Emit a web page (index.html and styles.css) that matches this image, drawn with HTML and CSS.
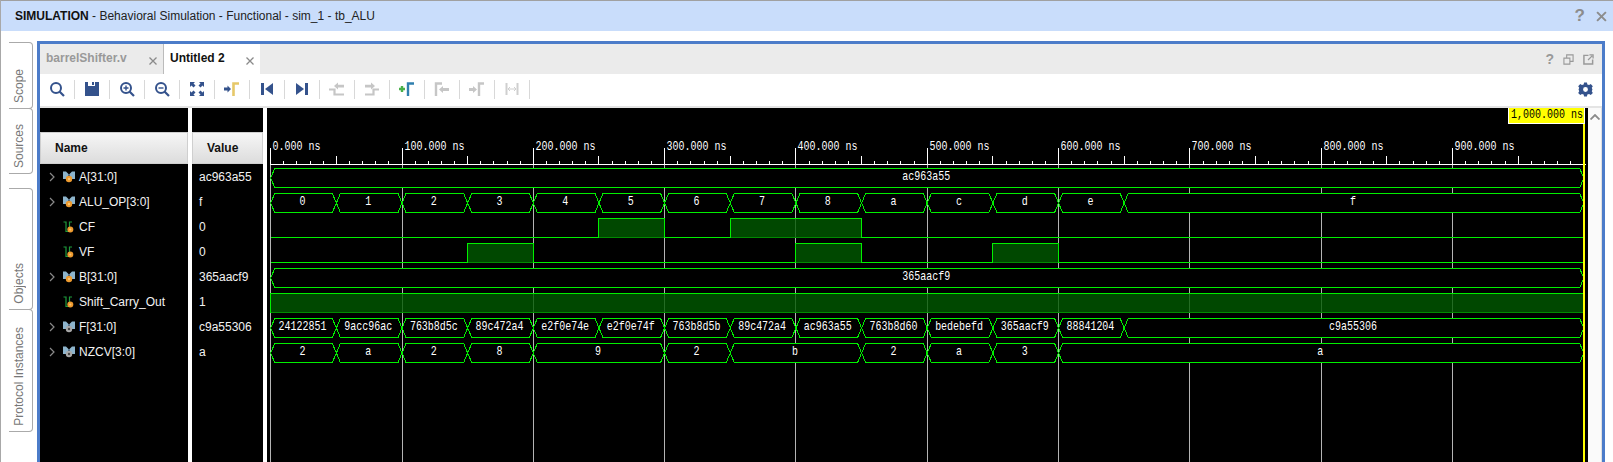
FILE: index.html
```html
<!DOCTYPE html>
<html lang="en">
<head>
    <meta charset="UTF-8">
    <meta name="viewport" content="width=device-width, initial-scale=1.0">
    <title>SIMULATION - tb_ALU</title>
    <link rel="stylesheet" href="styles.css">
</head>
<body>
    <svg class="defs">
        <symbol id="busOrange" viewBox="0 0 12 12">
            <path d="M0 0.5 L3 0.5 L6 3.5 L9 0.5 L12 0.5 L12 8 L9 8 L6 6 L3 8 L0 8 Z" fill="#8db4cc"/>
            <path d="M5 3.5 H7 V7 H5 Z" fill="#45617a"/>
            <circle cx="6" cy="8" r="3.2" fill="#ee9a2e"/>
            <circle cx="6" cy="8" r="1.2" fill="#ffc56e"/>
        </symbol>
        <symbol id="busGrey" viewBox="0 0 12 12">
            <path d="M0 0.5 L3 0.5 L6 3.5 L9 0.5 L12 0.5 L12 8 L9 8 L6 6 L3 8 L0 8 Z" fill="#8db4cc"/>
            <path d="M5 3.5 H7 V7 H5 Z" fill="#45617a"/>
            <circle cx="6" cy="8" r="3.2" fill="#a8a8a8"/>
            <circle cx="6" cy="8" r="1.2" fill="#444"/>
        </symbol>
        <symbol id="bitOrange" viewBox="0 0 12 12">
            <path d="M0.5 1 H3 V10.5 H6.5 V1 H9" fill="none" stroke="#1f9a3c" stroke-width="1.2"/>
            <circle cx="7.3" cy="8.5" r="3" fill="#ee9a2e"/>
            <circle cx="7.3" cy="8.5" r="1.1" fill="#ffc56e"/>
        </symbol>
        <symbol id="closeX" viewBox="0 0 8 8">
            <path d="M0.5 0.5 L7.5 7.5 M7.5 0.5 L0.5 7.5" stroke="#8a8a8a" stroke-width="1.3"/>
        </symbol>
    </svg>

    <div class="titlebar">
        <span class="title"><b>SIMULATION</b> - Behavioral Simulation - Functional - sim_1 - tb_ALU</span>
        <span class="title-help">?</span>
        <svg class="title-close" viewBox="0 0 10 10"><path d="M1 1 L9 9 M9 1 L1 9" stroke="#8c8c8c" stroke-width="1.8"/></svg>
    </div>

    <div class="workspace">
        <div class="sidetabs">
            <div class="sidetab tab-scope"><span>Scope</span></div>
            <div class="sidetab tab-sources"><span>Sources</span></div>
            <div class="sidetab tab-objects"><span>Objects</span></div>
            <div class="sidetab tab-protocol"><span>Protocol Instances</span></div>
        </div>

        <div class="panel">
            <div class="tabbar">
                <div class="tab tab-off">barrelShifter.v<svg class="close"><use href="#closeX"/></svg></div>
                <div class="tab tab-on">Untitled 2<svg class="close"><use href="#closeX"/></svg></div>
                <div class="tabbar-icons">
                    <span class="help">?</span>
                    <svg viewBox="0 0 12 12"><path d="M1 4.5 H7.5 V11 H1 Z M4 4 V1 H11 V8 H8" fill="none" stroke="#999" stroke-width="1.2"/></svg>
                    <svg viewBox="0 0 12 12"><path d="M6 1.5 H1 V11 H10.5 V6" fill="none" stroke="#999" stroke-width="1.6"/><path d="M5.5 6.5 L10 2 M7 1 H11 V5" fill="none" stroke="#999" stroke-width="1.4"/></svg>
                </div>
            </div>

            <div class="toolbar">
                <div class="tool"><svg viewBox="0 0 16 16"><circle cx="7" cy="7" r="5" fill="none" stroke="#34528c" stroke-width="2"/><path d="M10.5 10.5 L15 15" stroke="#34528c" stroke-width="2.2"/></svg></div>
                <div class="tool"><svg viewBox="0 0 16 16"><path d="M1 1 H4 V5 H11 V1 H15 V15 H1 Z" fill="#34528c"/><path d="M8 1 H10 V4 H8 Z" fill="#34528c"/></svg></div>
                <div class="tool"><svg viewBox="0 0 16 16"><circle cx="7" cy="7" r="5" fill="none" stroke="#34528c" stroke-width="2"/><path d="M10.5 10.5 L15 15" stroke="#34528c" stroke-width="2.2"/><path d="M4.5 7 H9.5 M7 4.5 V9.5" stroke="#34528c" stroke-width="1.4"/></svg></div>
                <div class="tool"><svg viewBox="0 0 16 16"><circle cx="7" cy="7" r="5" fill="none" stroke="#34528c" stroke-width="2"/><path d="M10.5 10.5 L15 15" stroke="#34528c" stroke-width="2.2"/><path d="M4.5 7 H9.5" stroke="#34528c" stroke-width="1.4"/></svg></div>
                <div class="tool"><svg viewBox="0 0 16 16"><path d="M1 1 H6 L4.5 2.5 L6.5 4.5 L4.5 6.5 L2.5 4.5 L1 6 Z M15 1 V6 L13.5 4.5 L11.5 6.5 L9.5 4.5 L11.5 2.5 L10 1 Z M1 15 V10 L2.5 11.5 L4.5 9.5 L6.5 11.5 L4.5 13.5 L6 15 Z M15 15 H10 L11.5 13.5 L9.5 11.5 L11.5 9.5 L13.5 11.5 L15 10 Z" fill="#34528c"/></svg></div>
                <div class="tool"><svg viewBox="0 0 16 16"><path d="M0 6.5 H3.5 V4.5 L7 8 L3.5 11.5 V9.5 H0 Z" fill="#34528c"/><path d="M9.5 15 V2.5 H15" fill="none" stroke="#e6c869" stroke-width="2.6"/></svg></div>
                <div class="tool"><svg viewBox="0 0 16 16"><path d="M2 2 H5 V14 H2 Z" fill="#34528c"/><path d="M14 2 V14 L6 8 Z" fill="#34528c"/></svg></div>
                <div class="tool"><svg viewBox="0 0 16 16"><path d="M11 2 H14 V14 H11 Z" fill="#34528c"/><path d="M2 2 V14 L10 8 Z" fill="#34528c"/></svg></div>
                <div class="tool"><svg viewBox="0 0 16 16"><path d="M0 8.5 H5.5 V13.5 H15" fill="none" stroke="#c6c6c6" stroke-width="2.2"/><path d="M5 5 L9 1.5 V3.7 H15 V6.5 H9 V8.5 Z" fill="#c6c6c6"/></svg></div>
                <div class="tool"><svg viewBox="0 0 16 16"><path d="M1 13.5 H9.5 V8.5 H15" fill="none" stroke="#c6c6c6" stroke-width="2.2"/><path d="M1 3.7 H7 V1.5 L11 5 L7 8.5 V6.5 H1 Z" fill="#c6c6c6"/></svg></div>
                <div class="tool"><svg viewBox="0 0 16 16"><path d="M0 8 H6 M3 5 V11" stroke="#49b04a" stroke-width="2.4"/><path d="M9 15 V2.5 H15" fill="none" stroke="#2f7fae" stroke-width="2.4"/></svg></div>
                <div class="tool"><svg viewBox="0 0 16 16"><path d="M2 15 V2.5 H8" fill="none" stroke="#c6c6c6" stroke-width="2.4"/><path d="M5 8.5 L9 5 V7 H15 V10 H9 V12 Z" fill="#c6c6c6"/></svg></div>
                <div class="tool"><svg viewBox="0 0 16 16"><path d="M0 7 H4 V5 L8 8.5 L4 12 V10 H0 Z" fill="#c6c6c6"/><path d="M10 15 V2.5 H15" fill="none" stroke="#c6c6c6" stroke-width="2.4"/></svg></div>
                <div class="tool"><svg viewBox="0 0 16 16"><path d="M2.5 2 V14 M13.5 2 V14" stroke="#cfcfcf" stroke-width="2"/><path d="M4 8 H12 M6 6 L4 8 L6 10 M10 6 L12 8 L10 10" fill="none" stroke="#cfcfcf" stroke-width="1"/></svg></div>
                <svg class="gear" viewBox="0 0 16 16"><path d="M6.5 0.5 H9.5 L10 2.6 L11.8 3.3 L13.6 2.2 L15.8 4.4 L14.7 6.2 L15.4 8 L15.4 8 L14.7 9.8 L15.8 11.6 L13.6 13.8 L11.8 12.7 L10 13.4 L9.5 15.5 H6.5 L6 13.4 L4.2 12.7 L2.4 13.8 L0.2 11.6 L1.3 9.8 L0.6 8 L1.3 6.2 L0.2 4.4 L2.4 2.2 L4.2 3.3 L6 2.6 Z M8 5.4 A2.6 2.6 0 1 0 8 10.6 A2.6 2.6 0 1 0 8 5.4 Z" fill="#34528c" fill-rule="evenodd"/></svg>
            </div>

            <div class="wavearea">
                <div class="pane names">
                    <div class="head">Name</div>
                    <div class="row"><svg class="chev" viewBox="0 0 6 10"><path d="M1 1 L5 5 L1 9" fill="none" stroke="#8a8a8a" stroke-width="1.2"/></svg><svg class="sig"><use href="#busOrange"/></svg>A[31:0]</div>
                    <div class="row"><svg class="chev" viewBox="0 0 6 10"><path d="M1 1 L5 5 L1 9" fill="none" stroke="#8a8a8a" stroke-width="1.2"/></svg><svg class="sig"><use href="#busOrange"/></svg>ALU_OP[3:0]</div>
                    <div class="row nochev"><svg class="sig"><use href="#bitOrange"/></svg>CF</div>
                    <div class="row nochev"><svg class="sig"><use href="#bitOrange"/></svg>VF</div>
                    <div class="row"><svg class="chev" viewBox="0 0 6 10"><path d="M1 1 L5 5 L1 9" fill="none" stroke="#8a8a8a" stroke-width="1.2"/></svg><svg class="sig"><use href="#busOrange"/></svg>B[31:0]</div>
                    <div class="row nochev"><svg class="sig"><use href="#bitOrange"/></svg>Shift_Carry_Out</div>
                    <div class="row"><svg class="chev" viewBox="0 0 6 10"><path d="M1 1 L5 5 L1 9" fill="none" stroke="#8a8a8a" stroke-width="1.2"/></svg><svg class="sig"><use href="#busGrey"/></svg>F[31:0]</div>
                    <div class="row"><svg class="chev" viewBox="0 0 6 10"><path d="M1 1 L5 5 L1 9" fill="none" stroke="#8a8a8a" stroke-width="1.2"/></svg><svg class="sig"><use href="#busGrey"/></svg>NZCV[3:0]</div>
                </div>
                <div class="pane values">
                    <div class="head">Value</div>
                    <div class="row">ac963a55</div>
                    <div class="row">f</div>
                    <div class="row">0</div>
                    <div class="row">0</div>
                    <div class="row">365aacf9</div>
                    <div class="row">1</div>
                    <div class="row">c9a55306</div>
                    <div class="row">a</div>
                </div>
                <svg id="waves" class="waves" viewBox="267 108 1321 354"></svg>
                <div class="scrollbar"><svg viewBox="0 0 10 6"><path d="M0.5 5.5 L5 1 L9.5 5.5" fill="none" stroke="#8a8a8a" stroke-width="1.8"/></svg></div>
            </div>
        </div>
    </div>
    <script src="waves.js"></script>
</body>
</html>
```

FILE: styles.css
```css
* {
    box-sizing: border-box;
}

html, body {
    height: 100%;
}

body {
    margin: 0;
    display: flex;
    flex-direction: column;
    overflow: hidden;
    background-color: white;
    font-family: "Liberation Sans", Arial, sans-serif;
    font-size: 12px;
    border-left: 1px solid #a8a8a8;
}

.defs {
    display: none;
}

.titlebar {
    height: 31px;
    flex: none;
    display: flex;
    align-items: center;
    margin-left: -1px;
    padding-left: 14px;
    background-color: #c9ddfb;
    border-top: 1px solid #a0a0a0;
    border-left: 1px solid #a8a8a8;
    color: #222;
}

.title {
    flex: 1;
}

.title b {
    color: #111;
}

.title-help {
    font-size: 17px;
    font-weight: bold;
    color: #8c8c8c;
    margin-right: 11px;
}

.title-close {
    width: 11px;
    height: 11px;
    margin-right: 6px;
}

.workspace {
    flex: 1;
    display: flex;
    min-height: 0;
}

.sidetabs {
    width: 36px;
    flex: none;
    padding: 11px 0 0 8px;
}

.sidetab {
    width: 24px;
    display: flex;
    flex-direction: column;
    align-items: center;
    justify-content: flex-end;
    padding: 0 3px 5px 0;
    border: 1px solid #aaa;
    border-left: 0;
    border-radius: 0 4px 4px 0;
    color: #777;
}

.sidetab span {
    writing-mode: vertical-rl;
    transform: rotate(180deg);
}

.tab-scope {
    height: 67px;
}

.tab-sources {
    height: 66px;
    margin-top: -1px;
}

.tab-objects {
    height: 122px;
    margin-top: 14px;
}

.tab-protocol {
    height: 123px;
    margin-top: -1px;
}

.panel {
    flex: 1;
    margin: 10px 8px 0 0;
    display: flex;
    flex-direction: column;
    min-width: 0;
    border: 3px solid #4c7cc9;
    border-bottom: 0;
}

.tabbar {
    height: 30px;
    flex: none;
    display: flex;
    background-color: #ebebeb;
}

.tab {
    display: flex;
    align-items: center;
    justify-content: space-between;
    font-weight: bold;
    padding: 0 6px 2px;
}

.tab-off {
    width: 123px;
    color: #999;
}

.tab-on {
    width: 97px;
    background-color: white;
    border-left: 1px solid #bbb;
    color: #111;
}

.close {
    width: 8px;
    height: 8px;
    margin-top: 5px;
}

.tabbar-icons {
    flex: 1;
    display: flex;
    justify-content: flex-end;
    align-items: center;
    gap: 9px;
    padding-right: 8px;
}

.tabbar-icons svg {
    width: 11px;
    height: 11px;
}

.tabbar-icons .help {
    font-size: 14px;
    font-weight: bold;
    color: #999;
}

.toolbar {
    height: 34px;
    flex: none;
    display: flex;
    align-items: center;
    padding-bottom: 2px;
    background-color: white;
    border-bottom: 2px solid #e4e4e4;
}

.tool {
    width: 35px;
    height: 19px;
    display: flex;
    align-items: center;
    justify-content: center;
    border-right: 1px solid #d8d8d8;
}

.tool svg {
    width: 16px;
    height: 16px;
}

.gear {
    width: 15px;
    height: 15px;
    margin-left: auto;
    margin-right: 9px;
}

.wavearea {
    flex: 1;
    min-height: 0;
    display: flex;
    overflow: hidden;
}

.pane {
    flex: none;
    background-color: black;
    color: #f2f2f2;
    padding-top: 24px;
    margin-right: 4px;
}

.names {
    width: 148px;
}

.values {
    width: 71px;
}

.head {
    height: 32px;
    display: flex;
    align-items: center;
    font-weight: bold;
    color: #111;
    background: linear-gradient(#f6f6f6, #dcdcdc);
    border: 1px solid #cfcfcf;
}

.names .head {
    padding-left: 14px;
}

.values .head {
    padding-left: 14px;
}

.row {
    height: 25px;
    display: flex;
    align-items: center;
    white-space: nowrap;
}

.names .row {
    padding-left: 9px;
}

.names .nochev {
    padding-left: 23px;
}

.values .row {
    padding-left: 7px;
}

.chev {
    width: 6px;
    height: 10px;
    margin-right: 8px;
}

.sig {
    width: 12px;
    height: 12px;
    margin-right: 4px;
}

.waves {
    flex: none;
    width: 1321px;
    height: 354px;
    background-color: black;
    font-family: "Liberation Mono", monospace;
    font-size: 10px;
}

.scrollbar {
    flex: 1;
    display: flex;
    justify-content: center;
    padding-top: 6px;
    background-color: #fafafa;
    border-right: 1px solid #e0e0e0;
}

.scrollbar svg {
    width: 10px;
    height: 6px;
}
```

FILE: waves.js
```js
// time in ns -> x on the page
const X0 = 270.7;
const PX_PER_NS = 1.3131;
const END = 1000;

const GREEN = '#00f000';
const DIM_GREEN = '#008a00';
const FILL_GREEN = '#005a00';

function tx(t) {
    return X0 + t * PX_PER_NS;
}

function label(x, y, text, fill, anchor) {
    return `<text transform="translate(${x} ${y}) scale(1 1.25)" fill="${fill}" text-anchor="${anchor || 'start'}">${text}</text>`;
}

function line(x1, y1, x2, y2, color) {
    return `<line x1="${x1}" y1="${y1}" x2="${x2}" y2="${y2}" stroke="${color}" shape-rendering="crispEdges"/>`;
}

function drawRuler() {
    let out = '';
    for (let t = 0; t < END; t += 10) {
        const x = Math.floor(tx(t)) + 0.5;
        if (t % 100 === 0) {
            out += line(x, 148, x, 164, 'white');
            out += label(x + 2, 150, `${t}.000 ns`, 'white');
        } else if (t % 50 === 0) {
            out += line(x, 156, x, 164, 'white');
        } else {
            out += line(x, 161, x, 164, 'white');
        }
    }
    out += line(270, 164.5, 1586, 164.5, 'white');
    return out;
}

function drawGrid() {
    let out = '';
    for (let t = 0; t < END; t += 100) {
        const x = Math.floor(tx(t)) + 0.5;
        out += line(x, 165, x, 462, '#b4b4b4');
    }
    return out;
}

function drawBus(top, segments) {
    const y1 = top + 0.5;
    const y2 = top + 19.5;
    const mid = top + 10;
    let out = '';
    segments.forEach(([t0, t1, text]) => {
        const a = tx(t0);
        const b = tx(t1);
        const points = [[a, mid], [a + 4, y1], [b - 4, y1], [b, mid], [b - 4, y2], [a + 4, y2]];
        out += `<polygon points="${points.join(' ')}" fill="black" stroke="${GREEN}" shape-rendering="crispEdges"/>`;
        out += label((a + b) / 2 - 1, top + 12, text, 'white', 'middle');
    });
    return out;
}

function drawBit(top, highs) {
    const y1 = top + 0.5;
    const y2 = top + 19.5;
    let out = '';
    let path = `M${tx(0)} ${y2}`;
    highs.forEach(([t0, t1]) => {
        const a = tx(t0);
        const b = tx(t1);
        out += `<rect x="${a}" y="${y1}" width="${b - a}" height="19" fill="${FILL_GREEN}" fill-opacity="0.8" shape-rendering="crispEdges"/>`;
        out += line(a, y2, b, y2, DIM_GREEN);
        path += ` M${a} ${y2} V${y1} H${b} V${y2}`;
    });
    // low stretches between the pulses
    let last = 0;
    highs.forEach(([t0, t1]) => {
        if (t0 > last) {
            out += line(tx(last), y2, tx(t0), y2, GREEN);
        }
        last = t1;
    });
    if (last < END) {
        out += line(tx(last), y2, tx(END), y2, GREEN);
    }
    out += `<path d="${path}" fill="none" stroke="${GREEN}" shape-rendering="crispEdges"/>`;
    return out;
}

function drawCursor() {
    let out = `<rect x="1583" y="123" width="2" height="339" fill="#ffff00"/>`;
    out += `<rect x="1508" y="108" width="77" height="16" fill="white"/>`;
    out += `<rect x="1509" y="108" width="75" height="15" fill="#ffff00"/>`;
    out += label(1511, 118, '1,000.000 ns', 'black');
    return out;
}

function stepEvery50(values) {
    return values.map((v, i) => [i * 50, (i + 1) * 50, v]);
}

const aluOp = stepEvery50(['0', '1', '2', '3', '4', '5', '6', '7', '8', 'a', 'c', 'd', 'e']);
aluOp.push([650, END, 'f']);

const fOut = stepEvery50(['24122851', '9acc96ac', '763b8d5c', '89c472a4', 'e2f0e74e', 'e2f0e74f', '763b8d5b',
    '89c472a4', 'ac963a55', '763b8d60', 'bedebefd', '365aacf9', '88841204']);
fOut.push([650, END, 'c9a55306']);

const nzcv = [[0, 50, '2'], [50, 100, 'a'], [100, 150, '2'], [150, 200, '8'], [200, 300, '9'], [300, 350, '2'],
    [350, 450, 'b'], [450, 500, '2'], [500, 550, 'a'], [550, 600, '3'], [600, END, 'a']];

document.getElementById('waves').innerHTML =
    drawGrid() +
    drawRuler() +
    drawBus(168, [[0, END, 'ac963a55']]) +
    drawBus(193, aluOp) +
    drawBit(218, [[250, 300], [350, 450]]) +
    drawBit(243, [[150, 200], [400, 450], [550, 600]]) +
    drawBus(268, [[0, END, '365aacf9']]) +
    drawBit(293, [[0, END]]) +
    drawBus(318, fOut) +
    drawBus(343, nzcv) +
    drawCursor();
```
